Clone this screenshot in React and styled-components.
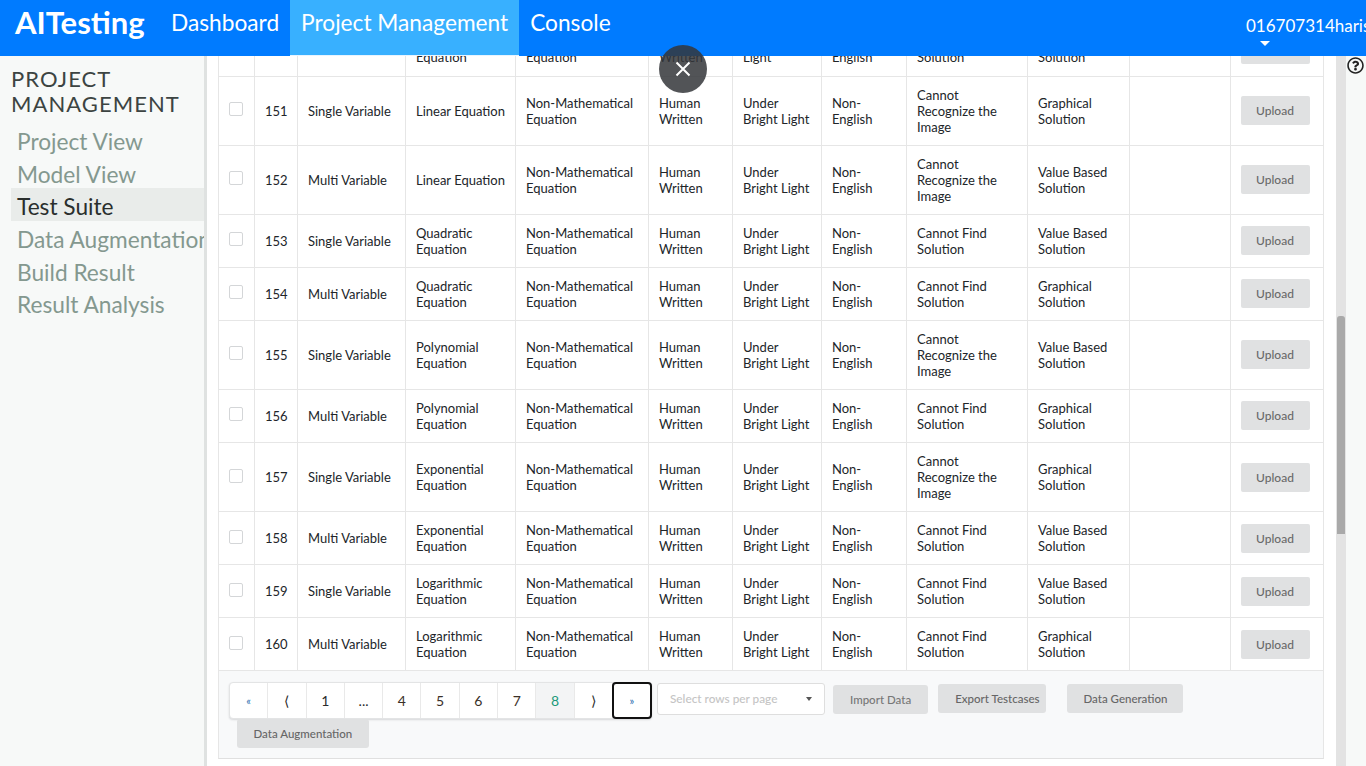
import styled, { createGlobalStyle } from "styled-components";
import { FaRegQuestionCircle } from "react-icons/fa";

const GlobalStyle = createGlobalStyle`
    html, body {
        margin: 0;
        height: 100%;
        overflow: hidden;
        font-family: "Lato", "Liberation Sans", sans-serif;
        background: #fff;
    }
    * {
        box-sizing: border-box;
    }
`;

const Page = styled.div`
    width: 1366px;
    height: 766px;
    position: relative;
    overflow: hidden;
    display: flex;
    flex-direction: column;
`;

const Header = styled.header`
    height: 56px;
    flex: none;
    background: #007bff;
    display: flex;
    align-items: stretch;
    color: #fff;
    overflow: hidden;
`;

const Brand = styled.div`
    font-size: 31px;
    font-weight: 700;
    padding: 5px 0 0 15px;
    width: 160px;
    line-height: 34px;
`;

const NavLink = styled.a`
    font-size: 22.7px;
    line-height: 28px;
    padding: 9px 11px 0;
    color: #fff;
    background: ${({ $active }) => ($active ? "#38b0ff" : "none")};
    border-bottom: ${({ $active }) => ($active ? "1px solid #e8f4ff" : "none")};
`;

const User = styled.div`
    margin-left: auto;
    width: 120px;
    padding-top: 15px;
    font-size: 17px;
    line-height: 21px;
    white-space: nowrap;
`;

const Caret = styled.div`
    width: 0;
    height: 0;
    margin: 5px 0 0 14px;
    border-left: 5px solid transparent;
    border-right: 5px solid transparent;
    border-top: 5px solid #fff;
`;

const Body = styled.div`
    flex: 1;
    min-height: 0;
    display: flex;
    background: #f7f9f8;
`;

const Sidebar = styled.aside`
    width: 204px;
    flex: none;
    padding: 10px 0 0 11px;
    overflow: hidden;
`;

const SideTitle = styled.h2`
    margin: 0 0 7.3px;
    font-size: 22px;
    font-weight: 400;
    line-height: 25px;
    letter-spacing: 1.05px;
    color: #3c4442;
`;

const SideItem = styled.div`
    height: 32.6px;
    padding-left: 6px;
    font-size: 22.7px;
    line-height: 38px;
    white-space: nowrap;
    color: ${({ $active }) => ($active ? "#2a2f2d" : "#84988f")};
    background: ${({ $active }) => ($active ? "#e9ecea" : "none")};
    overflow: hidden;
`;

const SideRail = styled.div`
    width: 14px;
    flex: none;
    background: linear-gradient(to right, #dfe2e1 0 3px, #fff 3px);
`;

const Main = styled.main`
    width: 1118px;
    flex: none;
    background: #fff;
    overflow: hidden;
`;

const TablePanel = styled.div`
    width: 1106px;
    margin-top: -33px;
    border-left: 1px solid #e6e6e6;
    border-right: 1px solid #e6e6e6;
    border-bottom: 1px solid #e0e0e0;
    background: #f8f9fa;
`;

const Table = styled.table`
    width: 1104px;
    table-layout: fixed;
    border-collapse: collapse;
    background: #fff;
    font-size: 13px;
    line-height: 16px;
    color: #212529;
`;

const Row = styled.tr`
    height: ${({ $h }) => $h}px;
    border-bottom: 1px solid #e6e6e6;
`;

const Cell = styled.td`
    padding: 0 9.5px 0 10.5px;
    border-right: 1px solid #e6e6e6;
    vertical-align: middle;

    &:last-child {
        border-right: none;
    }
`;

const Box = styled.span`
    display: block;
    width: 14px;
    height: 14px;
    margin: ${({ $late }) => ($late ? "-2px" : "-3px")} 0 0 -0.5px;
    border: 1px solid #d4d6d8;
    border-radius: 2px;
    background: #fff;
`;

const Upload = styled.div`
    width: 69px;
    height: 29px;
    margin: ${({ $late }) => ($late ? "2px" : "0")} 0 0 -0.5px;
    border-radius: 2px;
    background: #e0e1e2;
    color: #6a6a6a;
    font-size: 12px;
    font-weight: 500;
    line-height: 30px;
    text-align: center;
`;

const Footer = styled.div`
    height: 87px;
    padding: 11px 10px 0;
    display: flex;
    flex-wrap: wrap;
    align-content: flex-start;
`;

const Pager = styled.div`
    height: 37px;
    display: flex;
    border: 1px solid #e3e4e5;
    border-radius: 4px;
    box-shadow: 0 1px 2px rgba(34, 36, 38, 0.15);
    background: #fff;
    margin-right: 5px;
`;

const PageItem = styled.div`
    width: 38.3px;
    border-right: 1px solid #e9e9e9;
    display: flex;
    align-items: center;
    justify-content: center;
    font-size: ${({ $small }) => ($small ? "11px" : "14px")};
    color: ${({ $color }) => $color || "#2b2b2b"};
    background: ${({ $active }) => ($active ? "#f3f4f5" : "none")};
`;

const LastItem = styled(PageItem)`
    width: 40px;
    margin: -1px -1px -1px -1px;
    border: 2px solid #111;
    border-radius: 4px;
    background: #fff;
`;

const Select = styled.div`
    width: 168px;
    height: 32px;
    margin: 1px 8px 0 0;
    padding: 0 12px 0 12px;
    display: flex;
    align-items: center;
    justify-content: space-between;
    background: #fff;
    border: 1px solid #dedede;
    border-radius: 3px;
    font-size: 11.8px;
    font-weight: 500;
    color: #c4c4c4;
`;

const SelectCaret = styled.span`
    width: 0;
    height: 0;
    border-left: 3px solid transparent;
    border-right: 3px solid transparent;
    border-top: 4px solid #555;
`;

const Action = styled.div`
    height: 29px;
    margin: ${({ $m }) => $m};
    padding: ${({ $p }) => $p};
    border-radius: 3px;
    background: #e0e1e2;
    color: ${({ $muted }) => ($muted ? "#777" : "#666")};
    font-size: 11.5px;
    font-weight: 500;
    line-height: 30px;
    white-space: nowrap;
`;

const Right = styled.div`
    flex: 1;
    display: flex;
    min-width: 0;
`;

const Scroll = styled.div`
    width: 10px;
    flex: none;
    padding: 0 1px;
    background: #e3e3e3;
`;

const Thumb = styled.div`
    height: 218px;
    margin-top: 260px;
    border-radius: 3px 3px 0 0;
    background: #a9a9a9;
`;

const HelpColumn = styled.div`
    flex: 1;
    padding: 1px 0 0 1px;
    font-size: 17px;
    color: #222;
`;

const CloseButton = styled.div`
    position: absolute;
    left: 659px;
    top: 45px;
    width: 48px;
    height: 48px;
    border-radius: 50%;
    background: rgba(52, 54, 58, 0.85);
    display: flex;
    align-items: center;
    justify-content: center;
`;

const NON_MATH = "Non-Mathematical Equation";
const rows = [
    [150, "Multi Variable", 53, "Logarithmic Equation", "Under Low Light", "Cannot Find Solution", "Value Based Solution"],
    [151, "Single Variable", 69, "Linear Equation", "Under Bright Light", "Cannot Recognize the Image", "Graphical Solution"],
    [152, "Multi Variable", 69, "Linear Equation", "Under Bright Light", "Cannot Recognize the Image", "Value Based Solution"],
    [153, "Single Variable", 53, "Quadratic Equation", "Under Bright Light", "Cannot Find Solution", "Value Based Solution"],
    [154, "Multi Variable", 53, "Quadratic Equation", "Under Bright Light", "Cannot Find Solution", "Graphical Solution"],
    [155, "Single Variable", 69, "Polynomial Equation", "Under Bright Light", "Cannot Recognize the Image", "Value Based Solution"],
    [156, "Multi Variable", 53, "Polynomial Equation", "Under Bright Light", "Cannot Find Solution", "Graphical Solution"],
    [157, "Single Variable", 69, "Exponential Equation", "Under Bright Light", "Cannot Recognize the Image", "Graphical Solution"],
    [158, "Multi Variable", 53, "Exponential Equation", "Under Bright Light", "Cannot Find Solution", "Value Based Solution"],
    [159, "Single Variable", 53, "Logarithmic Equation", "Under Bright Light", "Cannot Find Solution", "Value Based Solution"],
    [160, "Multi Variable", 53, "Logarithmic Equation", "Under Bright Light", "Cannot Find Solution", "Graphical Solution"],
];

const columns = [35, 43, 108, 110, 133, 84, 89, 85, 121, 102, 101, 93];

export default function App() {
    return (
        <Page>
            <GlobalStyle />
            <Header>
                <Brand>AITesting</Brand>
                <NavLink>Dashboard</NavLink>
                <NavLink $active>Project Management</NavLink>
                <NavLink>Console</NavLink>
                <User>
                    016707314harish
                    <Caret />
                </User>
            </Header>
            <Body>
                <Sidebar>
                    <SideTitle>PROJECT MANAGEMENT</SideTitle>
                    <SideItem>Project View</SideItem>
                    <SideItem>Model View</SideItem>
                    <SideItem $active>Test Suite</SideItem>
                    <SideItem>Data Augmentation</SideItem>
                    <SideItem>Build Result</SideItem>
                    <SideItem>Result Analysis</SideItem>
                </Sidebar>
                <SideRail />
                <Main>
                    <TablePanel>
                        <Table>
                            <colgroup>
                                {columns.map((w, i) => (
                                    <col key={i} style={{ width: w }} />
                                ))}
                            </colgroup>
                            <tbody>
                                {rows.map(([id, variable, h, eq, light, rec, sol]) => (
                                    <Row key={id} $h={h}>
                                        <Cell><Box $late={id >= 157} /></Cell>
                                        <Cell>{id}</Cell>
                                        <Cell>{variable}</Cell>
                                        <Cell>{eq}</Cell>
                                        <Cell>{NON_MATH}</Cell>
                                        <Cell>Human Written</Cell>
                                        <Cell>{light}</Cell>
                                        <Cell>Non-English</Cell>
                                        <Cell>{rec}</Cell>
                                        <Cell>{sol}</Cell>
                                        <Cell />
                                        <Cell>
                                            <Upload $late={id >= 157}>Upload</Upload>
                                        </Cell>
                                    </Row>
                                ))}
                            </tbody>
                        </Table>
                        <Footer>
                            <Pager>
                                <PageItem $small $color="#2d6fb0">«</PageItem>
                                <PageItem>⟨</PageItem>
                                <PageItem>1</PageItem>
                                <PageItem>...</PageItem>
                                <PageItem $color="#3a3028">4</PageItem>
                                <PageItem $color="#3a3028">5</PageItem>
                                <PageItem $color="#3a3028">6</PageItem>
                                <PageItem $color="#3a3028">7</PageItem>
                                <PageItem $active $color="#1a9a7a">8</PageItem>
                                <PageItem>⟩</PageItem>
                                <LastItem $small $color="#2d6fb0">»</LastItem>
                            </Pager>
                            <Select>
                                Select rows per page
                                <SelectCaret />
                            </Select>
                            <Action $p="0 17px" $muted $m="3px 10px 0 0">Import Data</Action>
                            <Action $p="0 7px 0 17px" $m="2px 21px 0 0">Export Testcases</Action>
                            <Action $p="0 16px" $m="2px 0 0 0">Data Generation</Action>
                            <Action $p="0 16.5px" $m="0 0 0 8px">Data Augmentation</Action>
                        </Footer>
                    </TablePanel>
                </Main>
                <Right>
                    <Scroll>
                        <Thumb />
                    </Scroll>
                    <HelpColumn>
                        <FaRegQuestionCircle />
                    </HelpColumn>
                </Right>
            </Body>
            <CloseButton>
                <svg width="16" height="16" viewBox="0 0 16 16">
                    <path d="M1.5 1.5 L14.5 14.5 M14.5 1.5 L1.5 14.5" stroke="#fff" strokeWidth="2" fill="none" />
                </svg>
            </CloseButton>
        </Page>
    );
}
